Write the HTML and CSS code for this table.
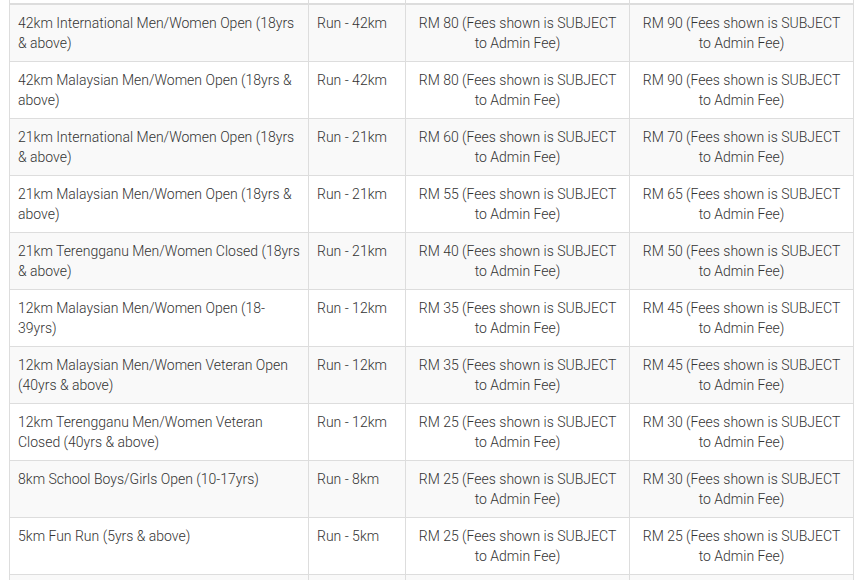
FILE: index.html
```html
<!DOCTYPE html>
<html lang="en">
<head>
<meta charset="utf-8">
<title>Race Categories</title>
<link rel="stylesheet" href="styles.css">
</head>
<body>
<div class="wrap">
<table class="fees">
<colgroup>
<col class="c1"><col class="c2"><col class="c3"><col class="c4">
</colgroup>
<thead>
<tr class="head"><th></th><th></th><th></th><th></th></tr>
</thead>
<tbody>
<tr><td>42km International Men/Women Open (18yrs &amp; above)</td><td>Run - 42km</td><td class="ctr">RM 80 (Fees shown is SUBJECT to Admin Fee)</td><td class="ctr">RM 90 (Fees shown is SUBJECT to Admin Fee)</td></tr>
<tr><td>42km Malaysian Men/Women Open (18yrs &amp; above)</td><td>Run - 42km</td><td class="ctr">RM 80 (Fees shown is SUBJECT to Admin Fee)</td><td class="ctr">RM 90 (Fees shown is SUBJECT to Admin Fee)</td></tr>
<tr><td>21km International Men/Women Open (18yrs &amp; above)</td><td>Run - 21km</td><td class="ctr">RM 60 (Fees shown is SUBJECT to Admin Fee)</td><td class="ctr">RM 70 (Fees shown is SUBJECT to Admin Fee)</td></tr>
<tr><td>21km Malaysian Men/Women Open (18yrs &amp; above)</td><td>Run - 21km</td><td class="ctr">RM 55 (Fees shown is SUBJECT to Admin Fee)</td><td class="ctr">RM 65 (Fees shown is SUBJECT to Admin Fee)</td></tr>
<tr><td>21km Terengganu Men/Women Closed (18yrs &amp; above)</td><td>Run - 21km</td><td class="ctr">RM 40 (Fees shown is SUBJECT to Admin Fee)</td><td class="ctr">RM 50 (Fees shown is SUBJECT to Admin Fee)</td></tr>
<tr><td>12km Malaysian Men/Women Open (18-39yrs)</td><td>Run - 12km</td><td class="ctr">RM 35 (Fees shown is SUBJECT to Admin Fee)</td><td class="ctr">RM 45 (Fees shown is SUBJECT to Admin Fee)</td></tr>
<tr><td>12km Malaysian Men/Women Veteran Open (40yrs &amp; above)</td><td>Run - 12km</td><td class="ctr">RM 35 (Fees shown is SUBJECT to Admin Fee)</td><td class="ctr">RM 45 (Fees shown is SUBJECT to Admin Fee)</td></tr>
<tr><td>12km Terengganu Men/Women Veteran Closed (40yrs &amp; above)</td><td>Run - 12km</td><td class="ctr">RM 25 (Fees shown is SUBJECT to Admin Fee)</td><td class="ctr">RM 30 (Fees shown is SUBJECT to Admin Fee)</td></tr>
<tr><td>8km School Boys/Girls Open (10-17yrs)</td><td>Run - 8km</td><td class="ctr">RM 25 (Fees shown is SUBJECT to Admin Fee)</td><td class="ctr">RM 30 (Fees shown is SUBJECT to Admin Fee)</td></tr>
<tr><td>5km Fun Run (5yrs &amp; above)</td><td>Run - 5km</td><td class="ctr">RM 25 (Fees shown is SUBJECT to Admin Fee)</td><td class="ctr">RM 25 (Fees shown is SUBJECT to Admin Fee)</td></tr>
<tr class="tail"><td></td><td></td><td></td><td></td></tr>
</tbody>
</table>
</div>
</body>
</html>
```

FILE: styles.css
```css
html, body {
  margin: 0;
  padding: 0;
  background: #fff;
}

.wrap {
  padding-left: 9px;
}

.fees {
  width: 844px;
  table-layout: fixed;
  border-collapse: collapse;
  font-family: Roboto, "Liberation Sans", Arial, sans-serif;
  font-size: 14px;
  line-height: 20px;
  color: #333;
}

.c1 { width: 299px; }
.c2 { width: 97px; }
.c3 { width: 224px; }
.c4 { width: 224px; }

.fees th,
.fees td {
  border: 1px solid #ddd;
  padding: 8px;
  vertical-align: top;
  text-align: left;
  font-weight: 300;
}

.fees .head th {
  height: 3px;
  padding: 0;
  border-top: none;
  border-bottom: 2px solid #ddd;
}

.fees tbody tr:nth-child(odd) td {
  background: #f9f9f9;
}

.fees td.ctr {
  text-align: center;
}

.fees .tail td {
  height: 20px;
}
```
